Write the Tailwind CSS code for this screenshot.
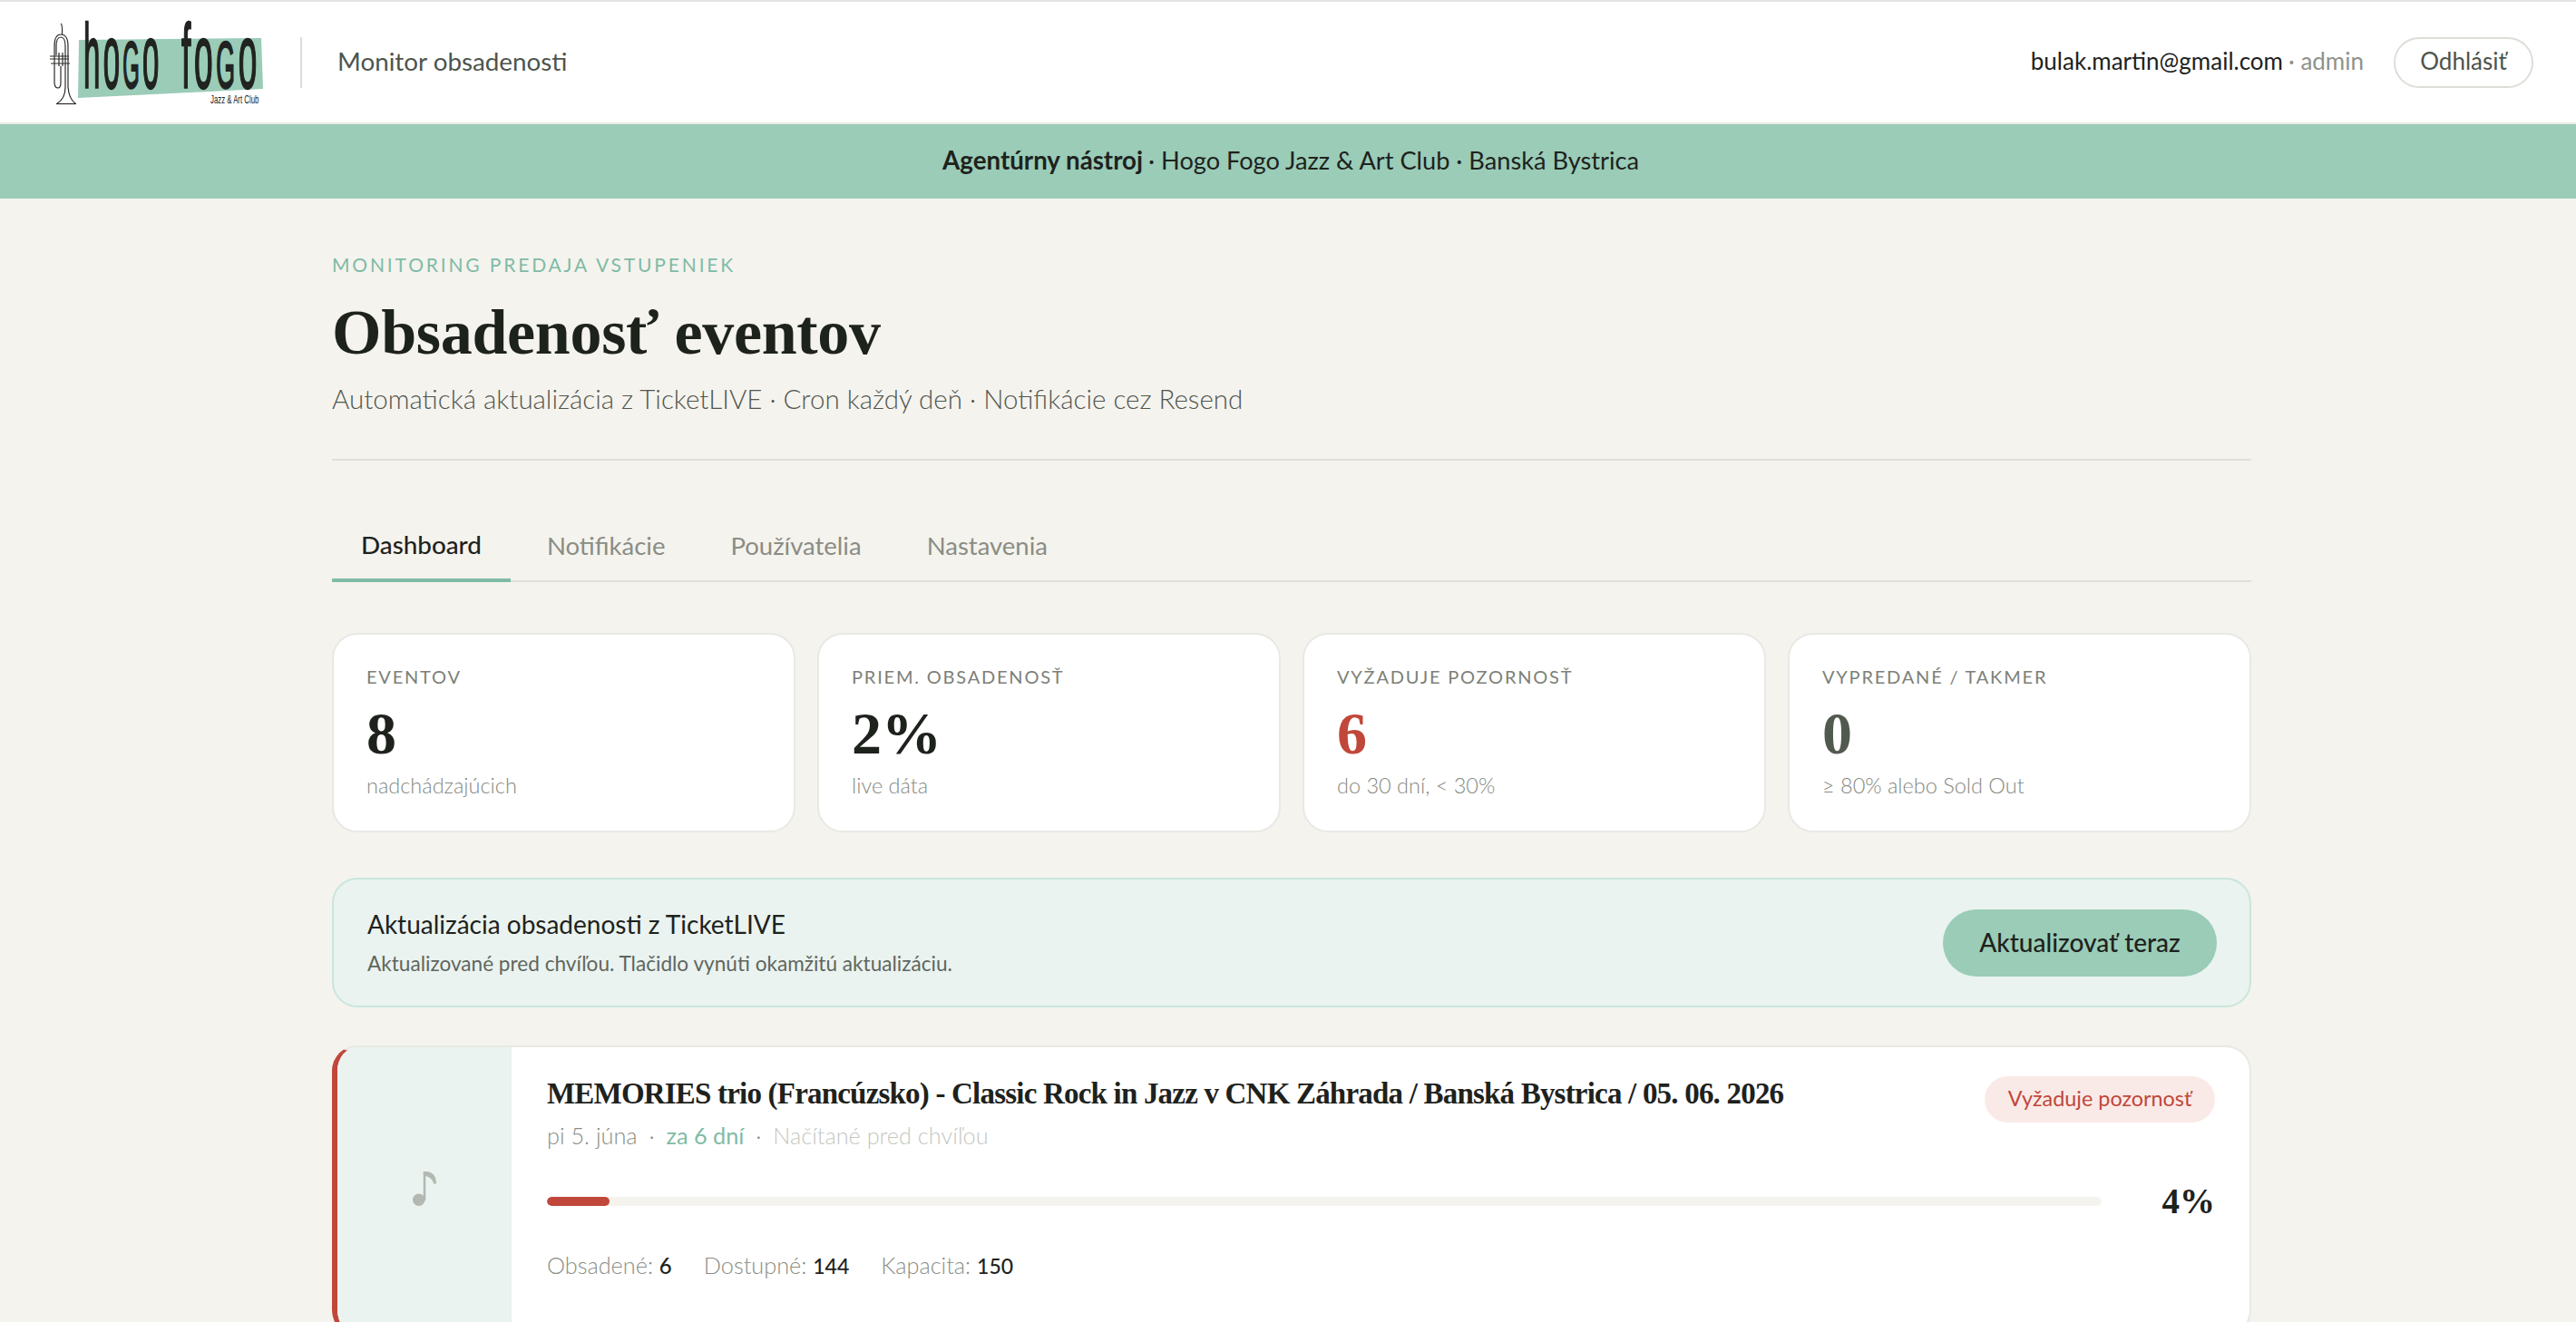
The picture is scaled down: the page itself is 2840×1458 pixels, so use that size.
<!DOCTYPE html>
<html lang="sk">
<head>
    <meta charset="UTF-8">
    <meta name="viewport" content="width=device-width, initial-scale=1.0">
    <title>Monitor obsadenosti</title>
    <script src="https://cdn.jsdelivr.net/npm/@tailwindcss/browser@4"></script>
</head>
<body class="bg-[#f5f3ee] font-['Lato','Liberation_Sans',sans-serif] text-[#1e221d] h-screen overflow-hidden">

    <!-- hlavička -->
    <header class="h-[137px] bg-white border-t-2 border-b-2 border-t-[#e4e4e2] border-b-[#ecebe7] flex items-center justify-between pl-[52px] pr-[47px]">
        <div class="flex items-center">
            <svg width="240" height="118" viewBox="52 3 240 118" class="block mb-[12px]">
                <polygon points="87,43 288,41 290,97 86,107" fill="#9accb8"/>
                <g fill="none" stroke="#2a2c28" stroke-width="1.2">
                    <path d="M67 25 Q69 26 68.500 37"/>
                    <path d="M60 60 L60 90 Q60 96 64 96 Q67 96 67 90 L67 72"/>
                    <path d="M60 60 L60 50 Q60 37 67 37 Q75 37 75 50 L75 95 Q76 108 83 113"/>
                    <path d="M62 60 L62 50 Q62 40 67 40 Q72 40 72 50 L72 95 Q72 108 63 113"/>
                    <path d="M55 61 L76 61 M55 64 L76 64 M56 69 L77 69 M65 57 L65 72 M69 57 L69 72"/>
                    <path d="M62 113.500 L84 113.500"/>
                </g>
                <g font-family="Liberation Sans" fill="#20231f" stroke="#20231f" stroke-width="2.500" letter-spacing="10">
                    <text transform="translate(92 96) scale(.33 1)" font-size="100">ho<tspan font-size="72">G</tspan>o</text>
                    <text transform="translate(200 96) scale(.37 1)" font-size="100">fo<tspan font-size="72">G</tspan>o</text>
                </g>
                <text transform="translate(232 113) scale(.6 1)" font-family="Liberation Sans" font-size="13" fill="#20231f">Jazz &amp; Art Club</text>
            </svg>
            <div class="w-[2px] h-[56px] bg-[#dcdcd8] ml-[39px] mr-[39px]"></div>
            <span class="text-[27.8px] text-[#4e544c] pb-[2px]">Monitor obsadenosti</span>
        </div>
        <div class="flex items-center">
            <span class="text-[26px] pb-[2px]">bulak.martin@gmail.com</span>
            <span class="text-[26px] text-[#8f9289] ml-[6px] pb-[2px]">· admin</span>
            <button class="ml-[33px] w-[154px] h-[56px] rounded-full border-2 border-[#deded9] text-[26px] text-[#4e544c] pb-[2px]">Odhlásiť</button>
        </div>
    </header>

    <!-- agentúrny pruh -->
    <div class="h-[82px] bg-[#9accb8] flex items-center justify-center text-[27.2px] pl-[6px] pb-[2px]">
        <strong class="font-bold text-[27.7px]">Agentúrny nástroj</strong>
        <span class="ml-[6px]">· Hogo Fogo Jazz &amp; Art Club · Banská Bystrica</span>
    </div>

    <main class="w-[2116px] ml-[366px] pt-[57px]">
        <p class="text-[21px] leading-[32px] tracking-[0.135em] text-[#7fbba6]">MONITORING PREDAJA VSTUPENIEK</p>
        <h1 class="mt-[19px] font-['Liberation_Serif',serif] font-bold text-[70px] tracking-[-0.3px] leading-[80px]">Obsadenosť eventov</h1>
        <p class="mt-[13px] text-[29.5px] leading-[40px] font-light text-[#50564e] pb-[46px] border-b-2 border-[#e0dfda]">Automatická aktualizácia z TicketLIVE · Cron každý deň · Notifikácie cez Resend</p>

        <!-- taby -->
        <nav class="mt-[58px] flex gap-[8px] border-b-2 border-[#dfded9] h-[76px]">
            <a class="px-[32px] h-[76px] pb-[2px] flex items-center border-b-4 border-[#7fbba6] text-[27.8px] font-medium">Dashboard</a>
            <a class="px-[32px] h-[74px] pb-[2px] flex items-center text-[27.5px] text-[#8a8d84]">Notifikácie</a>
            <a class="px-[32px] h-[74px] pb-[2px] flex items-center text-[27.5px] text-[#8a8d84]">Používatelia</a>
            <a class="px-[32px] h-[74px] pb-[2px] flex items-center text-[27.5px] text-[#8a8d84]">Nastavenia</a>
        </nav>

        <!-- štatistiky -->
        <div class="mt-[56px] grid grid-cols-4 gap-[24px]">
            <div class="h-[220px] bg-white border-2 border-[#e8e8e4] rounded-[28px] px-[36px] pt-[30px]">
                <p class="text-[20px] leading-[32px] tracking-[0.09em] text-[#7d8077]">EVENTOV</p>
                <p class="mt-[12px] font-['Liberation_Serif',serif] font-bold text-[66px] leading-[70px]">8</p>
                <p class="mt-[6px] text-[23.5px] leading-[32px] font-light text-[#868980]">nadchádzajúcich</p>
            </div>
            <div class="h-[220px] bg-white border-2 border-[#e8e8e4] rounded-[28px] px-[36px] pt-[30px]">
                <p class="text-[20px] leading-[32px] tracking-[0.09em] text-[#7d8077]">PRIEM. OBSADENOSŤ</p>
                <p class="mt-[12px] font-['Liberation_Serif',serif] font-bold text-[66px] leading-[70px]">2%</p>
                <p class="mt-[6px] text-[23.5px] leading-[32px] font-light text-[#868980]">live dáta</p>
            </div>
            <div class="h-[220px] bg-white border-2 border-[#e8e8e4] rounded-[28px] px-[36px] pt-[30px]">
                <p class="text-[20px] leading-[32px] tracking-[0.09em] text-[#7d8077]">VYŽADUJE POZORNOSŤ</p>
                <p class="mt-[12px] font-['Liberation_Serif',serif] font-bold text-[66px] leading-[70px] text-[#c0473a]">6</p>
                <p class="mt-[6px] text-[23.5px] leading-[32px] font-light text-[#868980]">do 30 dní, &lt; 30%</p>
            </div>
            <div class="h-[220px] bg-white border-2 border-[#e8e8e4] rounded-[28px] px-[36px] pt-[30px]">
                <p class="text-[20px] leading-[32px] tracking-[0.09em] text-[#7d8077]">VYPREDANÉ / TAKMER</p>
                <p class="mt-[12px] font-['Liberation_Serif',serif] font-bold text-[66px] leading-[70px] text-[#525a50]">0</p>
                <p class="mt-[6px] text-[23.5px] leading-[32px] font-light text-[#868980]">≥ 80% alebo Sold Out</p>
            </div>
        </div>

        <!-- aktualizácia -->
        <div class="mt-[50px] h-[143px] bg-[#eaf3ef] border-2 border-[#c9e6dd] rounded-[28px] pl-[37px] pr-[36px] flex items-center justify-between">
            <div>
                <p class="text-[28px] leading-[36px]">Aktualizácia obsadenosti z TicketLIVE</p>
                <p class="mt-[10px] text-[22.6px] leading-[32px] text-[#5f665f]">Aktualizované pred chvíľou. Tlačidlo vynúti okamžitú aktualizáciu.</p>
            </div>
            <button class="w-[302px] h-[74px] rounded-full bg-[#9accb8] text-[28px] font-medium pb-[2px]">Aktualizovať teraz</button>
        </div>

        <!-- event -->
        <article class="mt-[42px] h-[320px] bg-white border-2 border-l-[6px] border-[#e8e8e4] border-l-[#c0473a] rounded-[28px] overflow-hidden flex">
            <div class="w-[192px] bg-[#eaf3ef] flex items-center justify-center pb-[4px]">
                <svg width="26" height="38" viewBox="0 0 26 38" fill="#b4b8b2"><circle cx="6.700" cy="31.300" r="6.700"/><path d="M11.700 0H14C22 0 26 5 26 13.500H23C22 8 18 6 14.300 5V32H11.700Z"/></svg>
            </div>
            <div class="flex-1 pl-[39px] pr-[38px] pt-[32px]">
                <div class="flex justify-between items-start">
                    <div>
                        <h2 class="font-['Liberation_Serif',serif] font-bold text-[33px] tracking-[-0.8px] leading-[38px]">MEMORIES trio (Francúzsko) - Classic Rock in Jazz v CNK Záhrada / Banská Bystrica / 05. 06. 2026</h2>
                        <p class="mt-[10px] text-[25.3px] leading-[34px] font-light text-[#8a8d84]">pi 5. júna <span class="mx-[6px]">·</span> <span class="text-[#7fbba6] font-normal">za 6 dní</span> <span class="mx-[6px]">·</span> <span class="text-[#c4c7bf]">Načítané pred chvíľou</span></p>
                    </div>
                    <span class="h-[51px] w-[254px] rounded-full bg-[#faeae7] text-[#c0473a] text-[23.4px] flex items-center justify-center pb-[2px]">Vyžaduje pozornosť</span>
                </div>
                <div class="flex items-center mt-[31px]">
                    <div class="w-[1714px] h-[10px] rounded-full bg-[#f5f3ee] overflow-hidden">
                        <div class="h-full rounded-full bg-[#c0473a]" style="width: 4%"></div>
                    </div>
                    <span class="ml-auto font-['Liberation_Serif',serif] font-bold text-[39px] leading-[50px]">4%</span>
                </div>
                <div class="mt-[28px] flex gap-[35px] text-[25.3px] leading-[34px] font-light text-[#8a8d84]">
                    <span>Obsadené: <b class="font-medium text-[24px] text-[#1e221d]">6</b></span>
                    <span>Dostupné: <b class="font-medium text-[23px] text-[#1e221d]">144</b></span>
                    <span>Kapacita: <b class="font-medium text-[23px] text-[#1e221d]">150</b></span>
                </div>
            </div>
        </article>
    </main>

</body>
</html>
